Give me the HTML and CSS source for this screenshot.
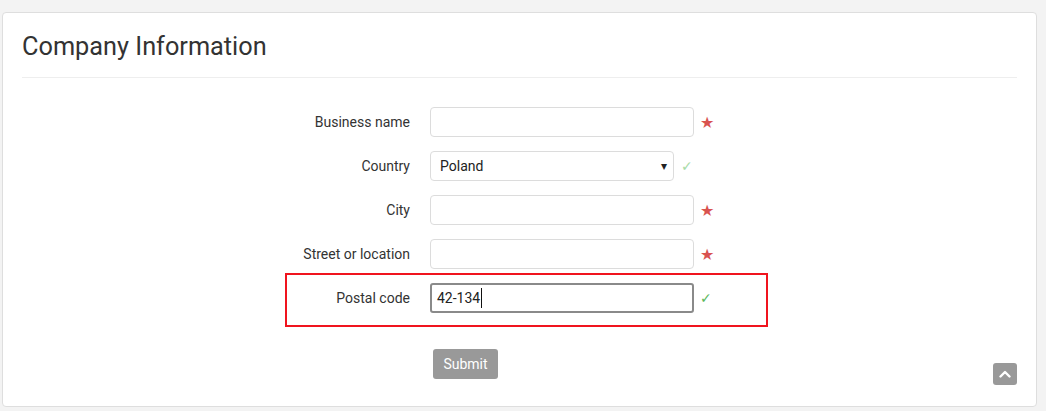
FILE: index.html
```html
<!DOCTYPE html>
<html lang="en">
<head>
<meta charset="utf-8">
<title>Company Information</title>
<link rel="stylesheet" href="styles.css">
</head>
<body>
<div class="card">
  <h1 class="title">Company Information</h1>
  <div class="divider"></div>
  <form class="form">
    <div class="row">
      <label class="label">Business name</label>
      <div class="control"><input class="input" type="text"></div>
      <span class="star">&#9733;</span>
    </div>
    <div class="row">
      <label class="label">Country</label>
      <div class="control">
        <div class="select"><span>Poland</span><span class="arrow">&#9662;</span></div>
        <span class="check light">&#10003;</span>
      </div>
    </div>
    <div class="row">
      <label class="label">City</label>
      <div class="control"><input class="input" type="text"></div>
      <span class="star">&#9733;</span>
    </div>
    <div class="row">
      <label class="label">Street or location</label>
      <div class="control"><input class="input" type="text"></div>
      <span class="star">&#9733;</span>
    </div>
    <div class="row highlighted">
      <label class="label">Postal code</label>
      <div class="control"><div class="input focused">42-134<span class="caret"></span></div></div>
      <span class="check">&#10003;</span>
    </div>
    <div class="actions">
      <button type="button" class="submit">Submit</button>
    </div>
  </form>
</div>
<a class="to-top" href="#">
  <svg width="12" height="8" viewBox="0 0 12 8"><path d="M1.5 6.5 L6 2 L10.5 6.5" fill="none" stroke="#fff" stroke-width="2.4" stroke-linecap="round" stroke-linejoin="round"/></svg>
</a>
</body>
</html>
```

FILE: styles.css
```css
html, body {
  margin: 0;
  background: #f3f3f3;
  font-family: Roboto, "Liberation Sans", Arial, sans-serif;
  color: #333;
}
body {
  padding: 12px 9px 0 2px;
}
.card {
  background: #fff;
  border: 1px solid #dedede;
  border-radius: 4px;
  padding: 0 19px 27px 19px;
}
.title {
  margin: 0;
  padding-top: 20px;
  font-size: 25.3px;
  line-height: 27px;
  font-weight: 400;
  color: #333;
}
.divider {
  height: 1px;
  background: #eeeeee;
  margin-top: 17px;
}
.form {
  margin-top: 29px;
}
.row {
  display: grid;
  grid-template-columns: 388px 264px auto;
  column-gap: 20px;
  align-items: center;
  height: 30px;
  margin-bottom: 14px;
}
.row.highlighted {
  position: relative;
}
.row.highlighted::after {
  content: "";
  position: absolute;
  left: 263px;
  top: -10px;
  width: 479px;
  height: 50px;
  border: 2px solid #f0141e;
  pointer-events: none;
}
.label {
  text-align: right;
  font-size: 14px;
  color: #333;
}
.control {
  display: flex;
  align-items: center;
  height: 30px;
}
.input {
  box-sizing: border-box;
  width: 264px;
  height: 30px;
  border: 1px solid #dcdcdc;
  border-radius: 4px;
  background: #fff;
  font-family: inherit;
  font-size: 14px;
  padding: 0 6px;
  margin: 0;
  outline: none;
}
.input.focused {
  display: flex;
  align-items: center;
  border: 2px solid #8a8a8a;
  border-radius: 3px;
  padding: 0 5px;
  color: #222;
}
.caret {
  display: inline-block;
  width: 1px;
  height: 20px;
  background: #111;
  margin-left: 1px;
}
.select {
  box-sizing: border-box;
  width: 244px;
  height: 30px;
  border: 1px solid #dcdcdc;
  border-radius: 4px;
  display: flex;
  align-items: center;
  justify-content: space-between;
  padding: 0 6px 0 9px;
  font-size: 14px;
  color: #222;
}
.arrow {
  font-size: 12px;
  color: #222;
}
.star {
  color: #d9534f;
  font-size: 16px;
  margin-left: -14px;
  font-family: "DejaVu Sans", sans-serif;
}
.check {
  color: #5cb85c;
  font-size: 14px;
  margin-left: -14px;
  font-family: "DejaVu Sans", sans-serif;
}
.control .check {
  margin-left: 7px;
}
.check.light {
  color: #a8dba8;
}
.actions {
  padding-left: 411px;
  margin-top: 36px;
}
.submit {
  width: 65px;
  height: 30px;
  border: none;
  border-radius: 3px;
  background: #999;
  color: #fff;
  font-family: inherit;
  font-size: 14px;
  padding: 0;
}
.to-top {
  position: fixed;
  right: 29px;
  bottom: 26px;
  width: 24px;
  height: 22px;
  border-radius: 3px;
  background: #999;
  display: flex;
  align-items: center;
  justify-content: center;
}
```
